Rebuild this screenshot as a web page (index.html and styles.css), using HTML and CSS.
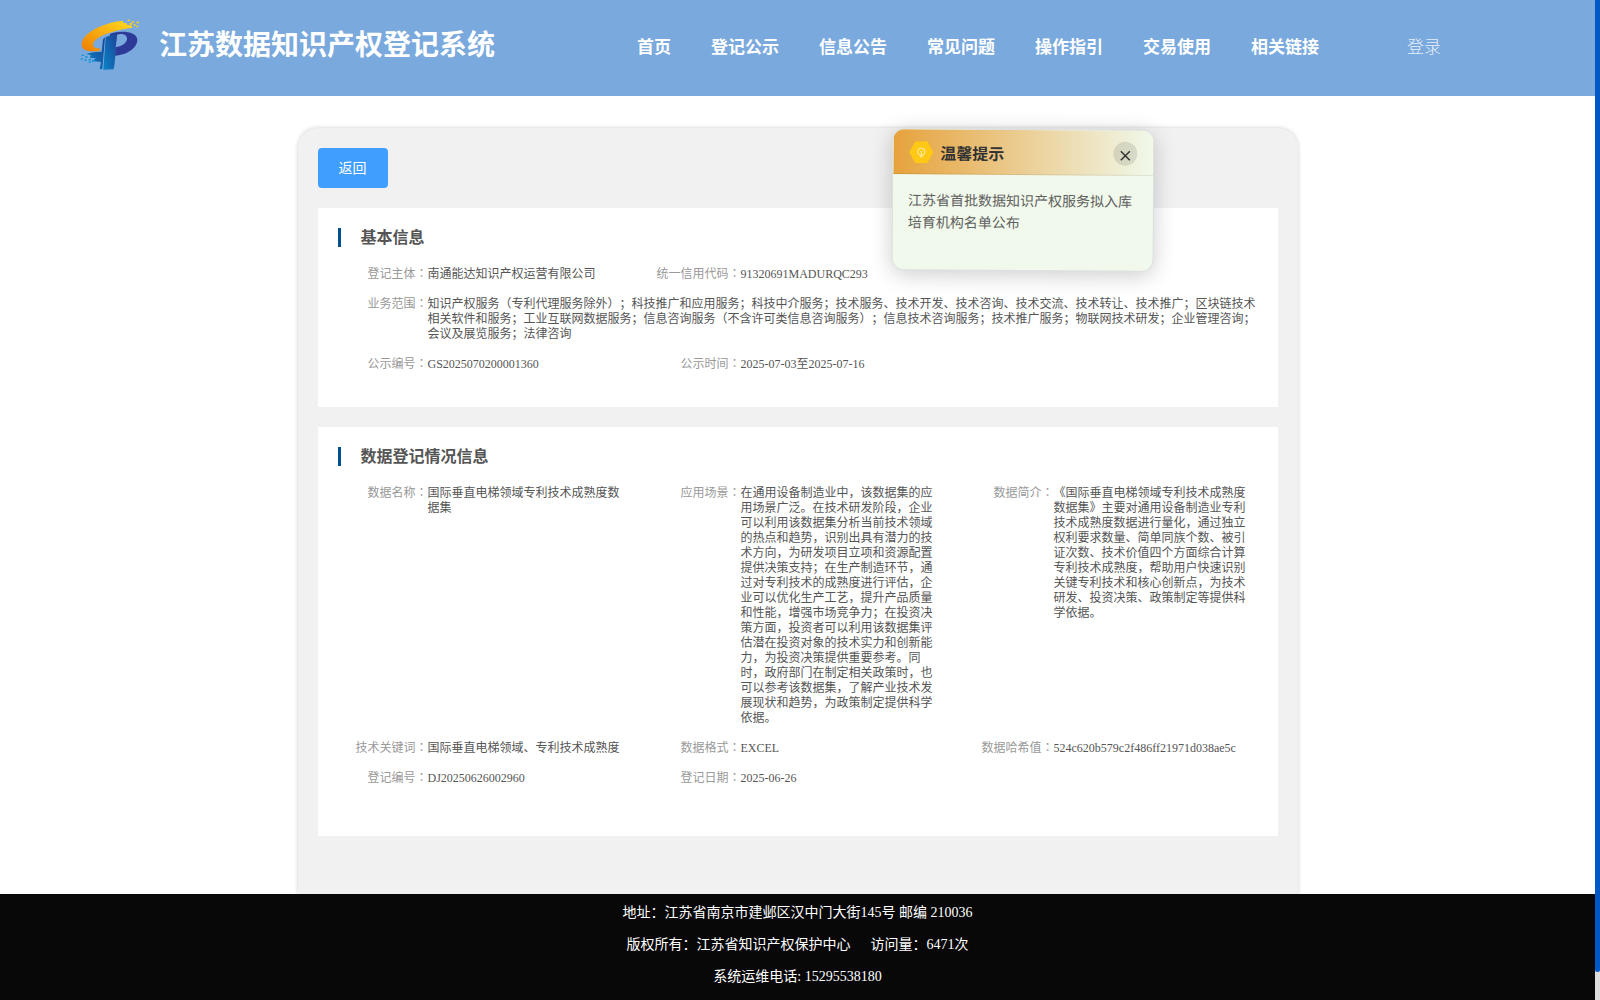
FILE: index.html
```html
<!DOCTYPE html>
<html lang="zh-CN">
<head>
    <meta charset="UTF-8">
    <meta name="viewport" content="width=device-width, initial-scale=1.0">
    <title>江苏数据知识产权登记系统</title>
    <link rel="stylesheet" href="styles.css">
</head>
<body>
    <header class="header">
        <svg class="logo" viewBox="60 58 180 153">
            <defs>
                <linearGradient id="orange" x1="0" y1="1" x2="1" y2="0">
                    <stop offset="0" stop-color="#f07c00"/>
                    <stop offset="1" stop-color="#ffdd22"/>
                </linearGradient>
                <linearGradient id="blue" x1="0" y1="1" x2="1" y2="0">
                    <stop offset="0" stop-color="#0a84c6"/>
                    <stop offset="1" stop-color="#1c4397"/>
                </linearGradient>
            </defs>
            <path fill="url(#orange)" d="M189 63C132 68 66 99 65 134C65 149 79 155 96 155L117 155L121 146C105 148 97 142 100 131C105 113 150 93 218 84L213 77L202 76L199 70L190 70Z"/>
            <path fill="#f9d21c" d="M203 60h7v4h-7zM215 65h7v4h-7zM229 66h8v5h-8zM209 70h8v5h-8zM221 74h6v5h-6zM229 78h6v5h-6z"/>
            <path fill="#2e3a97" d="M150 103C180 91 232 95 232 121C231 148 196 167 165 168L166 143C185 141 202 130 201 116C200 103 183 101 171 105L168 137L148 141Z"/>
            <path fill="url(#blue)" d="M137 112L171 101C166 130 168 176 161 209L130 210Z"/>
            <path fill="url(#blue)" d="M129 119L135 113L127 208L119 209L123 187L96 184L108 176L89 174L93 167L79 163C91 157 109 157 125 156Z"/>
            <path fill="#1296d6" d="M65 165h7v4h-7zM75 170h8v4h-8zM62 176h6v4h-6zM85 178h9v4h-9zM73 179h7v4h-7zM96 181h8v5h-8zM86 185h7v4h-7z"/>
        </svg>
        <h1 class="site-name">江苏数据知识产权登记系统</h1>
        <nav class="nav">
            <a>首页</a>
            <a>登记公示</a>
            <a>信息公告</a>
            <a>常见问题</a>
            <a>操作指引</a>
            <a>交易使用</a>
            <a>相关链接</a>
        </nav>
        <a class="login">登录</a>
    </header>

    <main class="container">
        <button class="back">返回</button>

        <section class="card">
            <h2 class="card-title">基本信息</h2>
            <div class="info">
                <div class="item"><span class="label">登记主体<i lang="zh-TW">：</i></span><span class="value">南通能达知识产权运营有限公司</span></div>
                <div class="item"><span class="label">统一信用代码<i lang="zh-TW">：</i></span><span class="value">91320691MADURQC293</span></div>
                <div class="item full"><span class="label">业务范围<i lang="zh-TW">：</i></span><span class="value">知识产权服务（专利代理服务除外）；科技推广和应用服务；科技中介服务；技术服务、技术开发、技术咨询、技术交流、技术转让、技术推广；区块链技术相关软件和服务；工业互联网数据服务；信息咨询服务（不含许可类信息咨询服务）；信息技术咨询服务；技术推广服务；物联网技术研发；企业管理咨询；会议及展览服务；法律咨询</span></div>
                <div class="item"><span class="label">公示编号<i lang="zh-TW">：</i></span><span class="value">GS2025070200001360</span></div>
                <div class="item"><span class="label">公示时间<i lang="zh-TW">：</i></span><span class="value">2025-07-03至2025-07-16</span></div>
            </div>
        </section>

        <section class="card card-data">
            <h2 class="card-title">数据登记情况信息</h2>
            <div class="info">
                <div class="item"><span class="label">数据名称<i lang="zh-TW">：</i></span><span class="value">国际垂直电梯领域专利技术成熟度数据集</span></div>
                <div class="item"><span class="label">应用场景<i lang="zh-TW">：</i></span><span class="value">在通用设备制造业中，该数据集的应用场景广泛。在技术研发阶段，企业可以利用该数据集分析当前技术领域的热点和趋势，识别出具有潜力的技术方向，为研发项目立项和资源配置提供决策支持；在生产制造环节，通过对专利技术的成熟度进行评估，企业可以优化生产工艺，提升产品质量和性能，增强市场竞争力；在投资决策方面，投资者可以利用该数据集评估潜在投资对象的技术实力和创新能力，为投资决策提供重要参考。同时，政府部门在制定相关政策时，也可以参考该数据集，了解产业技术发展现状和趋势，为政策制定提供科学依据。</span></div>
                <div class="item"><span class="label">数据简介<i lang="zh-TW">：</i></span><span class="value">《国际垂直电梯领域专利技术成熟度数据集》主要对通用设备制造业专利技术成熟度数据进行量化，通过独立权利要求数量、简单同族个数、被引证次数、技术价值四个方面综合计算专利技术成熟度，帮助用户快速识别关键专利技术和核心创新点，为技术研发、投资决策、政策制定等提供科学依据。</span></div>
                <div class="item"><span class="label">技术关键词<i lang="zh-TW">：</i></span><span class="value">国际垂直电梯领域、专利技术成熟度</span></div>
                <div class="item"><span class="label">数据格式<i lang="zh-TW">：</i></span><span class="value">EXCEL</span></div>
                <div class="item"><span class="label">数据哈希值<i lang="zh-TW">：</i></span><span class="value">524c620b579c2f486ff21971d038ae5c</span></div>
                <div class="item"><span class="label">登记编号<i lang="zh-TW">：</i></span><span class="value">DJ20250626002960</span></div>
                <div class="item"><span class="label">登记日期<i lang="zh-TW">：</i></span><span class="value">2025-06-26</span></div>
            </div>
        </section>
    </main>

    <footer class="footer">
        <p>地址：江苏省南京市建邺区汉中门大街145号 邮编 210036</p>
        <p>版权所有：江苏省知识产权保护中心<span class="visits">访问量：6471次</span></p>
        <p>系统运维电话: 15295538180</p>
    </footer>

    <aside class="notice">
        <div class="notice-head">
            <svg class="notice-icon" viewBox="0 0 24 22">
                <path fill="#ffc814" d="M6 0h12l6 11-6 11H6L0 11z"/>
                <g fill="none" stroke="#fff3c4" stroke-width="0.900">
                    <circle cx="12" cy="10.500" r="3.700"/>
                    <path d="M10.500 9.500l1.500 1.500 1.500-1.500M12 11v3M10.500 15.500h3"/>
                </g>
            </svg>
            <span class="notice-title">温馨提示</span>
            <span class="notice-close">
                <svg viewBox="0 0 12 12"><path d="M1.500 1.500l9 9M10.500 1.500l-9 9" stroke="#333" stroke-width="1.500"/></svg>
            </span>
        </div>
        <p class="notice-text">江苏省首批数据知识产权服务拟入库培育机构名单公布</p>
    </aside>

    <div class="scrollbar"><div class="thumb"></div></div>
</body>
</html>
```

FILE: styles.css
```css
* {
    box-sizing: border-box;
    margin: 0;
    padding: 0;
}
body {
    display: flex;
    flex-direction: column;
    height: 1000px;
    padding-right: 5px;
    overflow: hidden;
    background: #fff;
    color: #555;
    font-family: "Liberation Serif", "Noto Sans CJK SC", serif;
    font-size: 14px;
    text-spacing-trim: space-all;
}

/* header */
.header {
    display: flex;
    flex: none;
    align-items: center;
    height: 96px;
    padding-left: 80px;
    background: #79a9dd;
    color: #fff;
}
.logo {
    width: 60px;
    height: 51px;
    margin-bottom: 7px;
}
.site-name {
    width: 337px;
    margin: 0 141px 4px 19px;
    font-size: 28px;
    line-height: 40px;
    white-space: nowrap;
}
.nav {
    display: flex;
    gap: 40px;
    font-size: 17px;
    font-weight: bold;
    line-height: 24px;
}
.login {
    margin-left: 88px;
    font-size: 17px;
    line-height: 24px;
    font-weight: 300;
    color: #e6effa;
}

/* content */
.container {
    flex: none;
    width: 1000px;
    height: 766px;
    margin: 32px auto 0;
    padding: 20px;
    border-radius: 20px 20px 0 0;
    background: #f1f1f1;
    box-shadow: 0 0 4px rgba(0, 0, 0, 0.2);
}
.back {
    display: block;
    width: 70px;
    height: 40px;
    margin-bottom: 20px;
    padding-bottom: 2px;
    border: none;
    border-radius: 4px;
    background: #409eff;
    color: #fff;
    font-family: inherit;
    font-size: 14px;
}
.card {
    height: 199px;
    margin-bottom: 20px;
    padding: 20px;
    background: #fff;
}
.card-data {
    height: 409px;
}
.card-title {
    height: 19px;
    margin-bottom: 20px;
    padding-left: 20px;
    border-left: 3px solid #00508f;
    font-size: 16px;
    line-height: 20px;
}
.info {
    display: grid;
    grid-template-columns: 313px 313px 294px;
    row-gap: 15px;
    font-size: 12px;
    line-height: 15px;
}
.item {
    display: flex;
}
.full {
    grid-column: 1 / -1;
}
.label {
    flex: none;
    width: 90px;
    color: #999;
    text-align: right;
    white-space: nowrap;
}
/* centred full-width colon */
.label i {
    font-family: "Noto Sans CJK TC", sans-serif;
    font-style: normal;
    line-height: 1;
}
.value {
    width: 200px;
}
.full .value {
    width: 830px;
}

/* footer */
.footer {
    flex: 1;
    padding-top: 3px;
    background: #080808;
    color: #fff;
    text-align: center;
    line-height: 32px;
}
.visits {
    margin-left: 20px;
}

/* floating notice */
.notice {
    position: absolute;
    left: 892px;
    top: 129px;
    width: 262px;
    height: 142px;
    overflow: hidden;
    border: 1px solid #dcdfe0;
    border-radius: 12px;
    background: #f0f9eb;
    box-shadow: 0 4px 22px rgba(0, 0, 0, 0.2);
    transform: rotate(0.4deg);
}
.notice-head {
    display: flex;
    align-items: center;
    height: 45px;
    padding: 2px 16px 0;
    border-bottom: 1px solid rgba(0, 0, 0, 0.08);
    background: linear-gradient(90deg, #e6a23c, #f0f9eb);
}
.notice-icon {
    width: 24px;
    height: 22px;
}
.notice-title {
    flex: 1;
    margin-left: 7px;
    color: #333;
    font-size: 16px;
    font-weight: bold;
}
.notice-close {
    display: flex;
    align-items: center;
    justify-content: center;
    width: 24px;
    height: 24px;
    border-radius: 50%;
    background: rgba(0, 0, 0, 0.1);
}
.notice-close svg {
    width: 12px;
    height: 12px;
    margin-top: 3px;
}
.notice-text {
    padding: 16px 15px;
    color: #606060;
    font-size: 14px;
    line-height: 22px;
}

.scrollbar {
    position: fixed;
    top: 0;
    right: 0;
    width: 5px;
    height: 100%;
    background: #ddd;
}
.thumb {
    height: 972px;
    border-radius: 0 0 3px 3px;
    background: #0058c6;
}
```
